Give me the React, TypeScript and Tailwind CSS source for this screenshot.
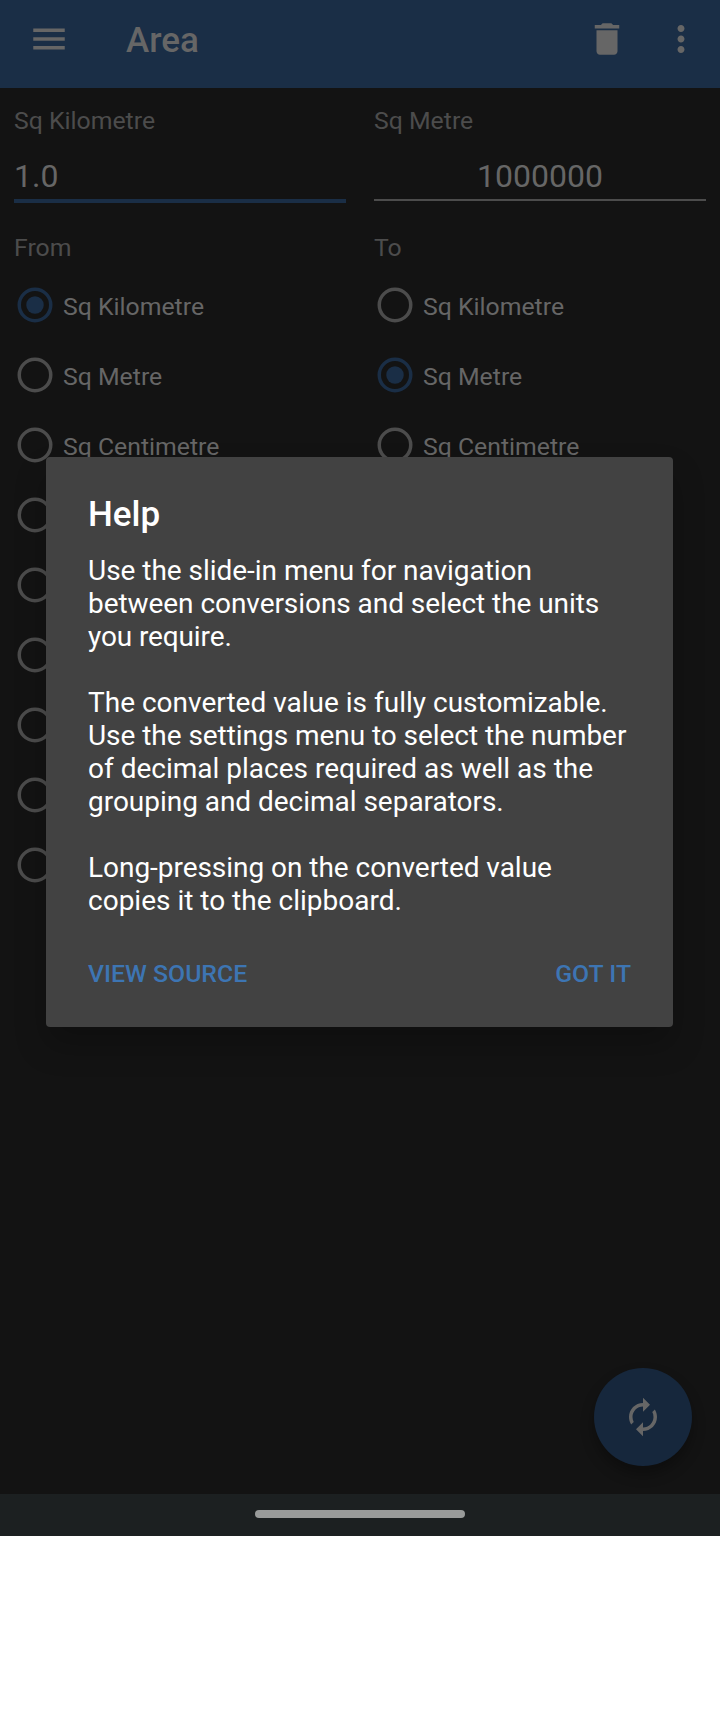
import React from "react";

const UNITS = ["Sq Kilometre", "Sq Metre", "Sq Centimetre", "", "", "", "", "", ""];

function Radio({ checked }: { checked: boolean }) {
  return (
    <svg viewBox="0 0 24 24" className={checked ? "size-[42px] shrink-0 text-[#1a2e46]" : "size-[42px] shrink-0 text-[#4c4c4c]"}>
      <circle cx="12" cy="12" r="9" fill="none" stroke="currentColor" strokeWidth="2" />
      {checked && <circle cx="12" cy="12" r="5" fill="currentColor" />}
    </svg>
  );
}

function UnitColumn({ title, selected }: { title: string; selected: string }) {
  return (
    <div className="flex flex-1 flex-col px-[14px]">
      <div className="h-[39px] text-[24.8px] leading-[33px] text-[#4c4c4c]">{title}</div>
      {UNITS.map((unit, i) => (
        <div key={i} className="flex h-[70px] items-center">
          <Radio checked={unit === selected} />
          {unit && <span className="pt-[3px] pl-[7px] text-[24.8px] leading-[33px] text-[#666666]">{unit}</span>}
        </div>
      ))}
    </div>
  );
}

function HelpDialog() {
  return (
    <div className="absolute top-[457px] left-[46px] flex h-[570px] w-[627px] flex-col rounded-[4px] bg-[#424242] px-[42px] pt-[37px] text-white shadow-[0_18px_32px_rgba(0,0,0,0.22)]">
      <h2 className="text-[35px] leading-[41px] font-medium">Help</h2>
      <div className="mt-[19px] text-[28px] leading-[33px] whitespace-nowrap">
        <p>
          <span className="tracking-[-0.03px]">Use the slide-in menu for navigation</span>
          <br />
          <span className="tracking-[-0.06px]">between conversions and select the units</span>
          <br />
          <span className="tracking-[-0.12px]">you require.</span>
        </p>
        <p className="mt-[33px]">
          The converted value is fully customizable.
          <br />
          <span className="tracking-[-0.05px]">Use the settings menu to select the number</span>
          <br />
          of decimal places required as well as the
          <br />
          <span className="tracking-[-0.03px]">grouping and decimal separators.</span>
        </p>
        <p className="mt-[33px]">
          <span className="tracking-[-0.04px]">Long-pressing on the converted value</span>
          <br />
          copies it to the clipboard.
        </p>
      </div>
      <div className="mt-[40px] flex justify-between text-[24.8px] leading-[33px] font-medium text-[#3d75b3]">
        <button>VIEW SOURCE</button>
        <button>GOT IT</button>
      </div>
    </div>
  );
}

export default function App() {
  return (
    <div className="h-[1712px] w-[720px] bg-white font-[Roboto,sans-serif]">
      <div className="relative flex h-[1536px] flex-col overflow-hidden bg-[#131313]">
        <header className="flex h-[88px] shrink-0 items-start bg-[#1a2e46] text-[#666666]">
          <svg viewBox="0 0 24 24" fill="currentColor" className="mt-[18px] ml-[28px] size-[42px]">
            <path d="M3 18h18v-2H3v2zm0-5h18v-2H3v2zm0-7v2h18V6H3z" />
          </svg>
          <h1 className="mt-[20px] ml-[56px] flex-1 text-[35px] leading-[41px] font-medium">Area</h1>
          <svg viewBox="0 0 24 24" fill="currentColor" className="mt-[18px] size-[42px]">
            <path d="M6 19c0 1.100.9 2 2 2h8c1.100 0 2-.9 2-2V7H6v12zM19 4h-3.500l-1-1h-5l-1 1H5v2h14V4z" />
          </svg>
          <svg viewBox="0 0 24 24" fill="currentColor" className="mt-[18px] mr-[18px] ml-[32px] size-[42px]">
            <path d="M12 8c1.100 0 2-.9 2-2s-.9-2-2-2-2 .9-2 2 .9 2 2 2zm0 2c-1.100 0-2 .9-2 2s.9 2 2 2 2-.9 2-2-.9-2-2-2zm0 6c-1.100 0-2 .9-2 2s.9 2 2 2 2-.9 2-2-.9-2-2-2z" />
          </svg>
        </header>

        <main className="flex flex-1 flex-col pt-[16px]">
          <div className="flex h-[127px]">
            <div className="flex-1 px-[14px]">
              <div className="text-[24.8px] leading-[33px] text-[#4c4c4c]">Sq Kilometre</div>
              <div className="mt-[21px] h-[45px] border-b-4 border-[#1a2e46] text-[32px] leading-[37px] text-[#666666]">1.0</div>
            </div>
            <div className="flex-1 px-[14px]">
              <div className="text-[24.8px] leading-[33px] text-[#4c4c4c]">Sq Metre</div>
              <div className="mt-[21px] h-[43px] border-b-2 border-[#4c4c4c] text-center text-[32px] leading-[37px] text-[#666666]">1000000</div>
            </div>
          </div>
          <div className="flex">
            <UnitColumn title="From" selected="Sq Kilometre" />
            <UnitColumn title="To" selected="Sq Metre" />
          </div>
        </main>

        <footer className="flex h-[42px] shrink-0 justify-center bg-[#1c2021] pt-[16px]">
          <div className="h-[8px] w-[210px] rounded-full bg-[#999b9a]" />
        </footer>

        <button className="absolute top-[1368px] left-[594px] flex size-[98px] items-center justify-center rounded-full bg-[#16273c] text-[#666666] shadow-[0_8px_14px_rgba(0,0,0,0.3)]">
          <svg viewBox="0 0 24 24" fill="currentColor" className="size-[42px]">
            <path d="M12 6v3l4-4-4-4v3c-4.420 0-8 3.580-8 8 0 1.570.46 3.030 1.240 4.260L6.700 14.800c-.45-.83-.7-1.790-.7-2.800 0-3.310 2.690-6 6-6zm6.760 1.740L17.300 9.200c.44.84.7 1.790.7 2.800 0 3.310-2.690 6-6 6v-3l-4 4 4 4v-3c4.420 0 8-3.580 8-8 0-1.570-.46-3.030-1.240-4.260z" />
          </svg>
        </button>

        <HelpDialog />
      </div>
    </div>
  );
}
